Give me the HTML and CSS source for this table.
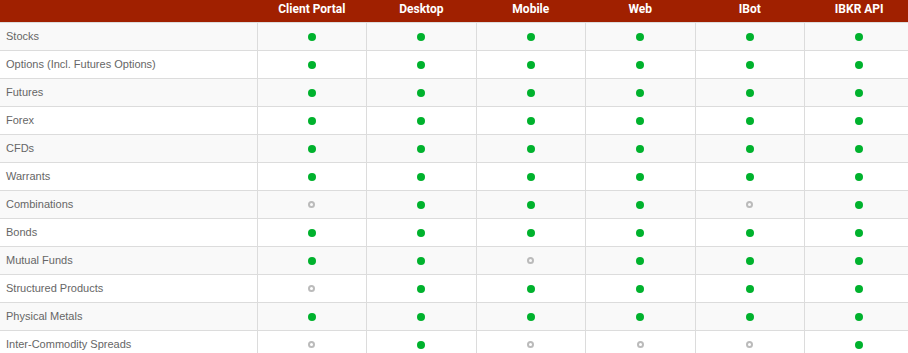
FILE: index.html
```html
<!DOCTYPE html>
<html lang="en">
<head>
    <meta charset="UTF-8">
    <title>Trading Platforms</title>
    <link rel="stylesheet" href="styles.css">
</head>
<body>
    <table class="platforms">
        <thead>
            <tr>
                <th class="product"></th>
                <th>Client Portal</th>
                <th>Desktop</th>
                <th>Mobile</th>
                <th>Web</th>
                <th>IBot</th>
                <th>IBKR API</th>
            </tr>
        </thead>
        <tbody>
            <tr><td class="product">Stocks</td><td><span class="dot"></span></td><td><span class="dot"></span></td><td><span class="dot"></span></td><td><span class="dot"></span></td><td><span class="dot"></span></td><td><span class="dot"></span></td></tr>
            <tr><td class="product">Options (Incl. Futures Options)</td><td><span class="dot"></span></td><td><span class="dot"></span></td><td><span class="dot"></span></td><td><span class="dot"></span></td><td><span class="dot"></span></td><td><span class="dot"></span></td></tr>
            <tr><td class="product">Futures</td><td><span class="dot"></span></td><td><span class="dot"></span></td><td><span class="dot"></span></td><td><span class="dot"></span></td><td><span class="dot"></span></td><td><span class="dot"></span></td></tr>
            <tr><td class="product">Forex</td><td><span class="dot"></span></td><td><span class="dot"></span></td><td><span class="dot"></span></td><td><span class="dot"></span></td><td><span class="dot"></span></td><td><span class="dot"></span></td></tr>
            <tr><td class="product">CFDs</td><td><span class="dot"></span></td><td><span class="dot"></span></td><td><span class="dot"></span></td><td><span class="dot"></span></td><td><span class="dot"></span></td><td><span class="dot"></span></td></tr>
            <tr><td class="product">Warrants</td><td><span class="dot"></span></td><td><span class="dot"></span></td><td><span class="dot"></span></td><td><span class="dot"></span></td><td><span class="dot"></span></td><td><span class="dot"></span></td></tr>
            <tr><td class="product">Combinations</td><td><span class="dot off"></span></td><td><span class="dot"></span></td><td><span class="dot"></span></td><td><span class="dot"></span></td><td><span class="dot off"></span></td><td><span class="dot"></span></td></tr>
            <tr><td class="product">Bonds</td><td><span class="dot"></span></td><td><span class="dot"></span></td><td><span class="dot"></span></td><td><span class="dot"></span></td><td><span class="dot"></span></td><td><span class="dot"></span></td></tr>
            <tr><td class="product">Mutual Funds</td><td><span class="dot"></span></td><td><span class="dot"></span></td><td><span class="dot off"></span></td><td><span class="dot"></span></td><td><span class="dot"></span></td><td><span class="dot"></span></td></tr>
            <tr><td class="product">Structured Products</td><td><span class="dot off"></span></td><td><span class="dot"></span></td><td><span class="dot"></span></td><td><span class="dot"></span></td><td><span class="dot"></span></td><td><span class="dot"></span></td></tr>
            <tr><td class="product">Physical Metals</td><td><span class="dot"></span></td><td><span class="dot"></span></td><td><span class="dot"></span></td><td><span class="dot"></span></td><td><span class="dot"></span></td><td><span class="dot"></span></td></tr>
            <tr><td class="product">Inter-Commodity Spreads</td><td><span class="dot off"></span></td><td><span class="dot"></span></td><td><span class="dot off"></span></td><td><span class="dot off"></span></td><td><span class="dot off"></span></td><td><span class="dot"></span></td></tr>
        </tbody>
    </table>
</body>
</html>
```

FILE: styles.css
```css
body {
    margin: 0;
    overflow: hidden;
    background: #fff;
}
.platforms {
    width: 914px;
    border-collapse: collapse;
    table-layout: fixed;
    font-family: "Liberation Sans", Arial, sans-serif;
}
.platforms th {
    background: #a02000;
    color: #fff;
    font-family: Roboto, Arial, sans-serif;
    font-weight: bold;
    font-size: 12px;
    line-height: 14px;
    height: 20px;
    padding: 2px 0 0;
    text-align: center;
    vertical-align: top;
    width: 109px;
}
.platforms th.product {
    width: 256px;
}
.platforms td {
    height: 26px;
    padding: 0 0 1px;
    border-top: 1px solid #dcdcdc;
    border-left: 1px solid #dcdcdc;
    text-align: center;
    vertical-align: middle;
}
.platforms td.product {
    border-left: none;
    text-align: left;
    padding-left: 6px;
    font-size: 11px;
    color: #666;
}
.platforms tbody tr:nth-child(odd) {
    background: #f9f9f9;
}
.dot {
    display: inline-block;
    width: 8px;
    height: 8px;
    border-radius: 50%;
    background: #00b22d;
    vertical-align: middle;
}
.dot.off {
    width: 7px;
    height: 7px;
    box-sizing: border-box;
    background: transparent;
    border: 2px solid #bbb;
}
```
